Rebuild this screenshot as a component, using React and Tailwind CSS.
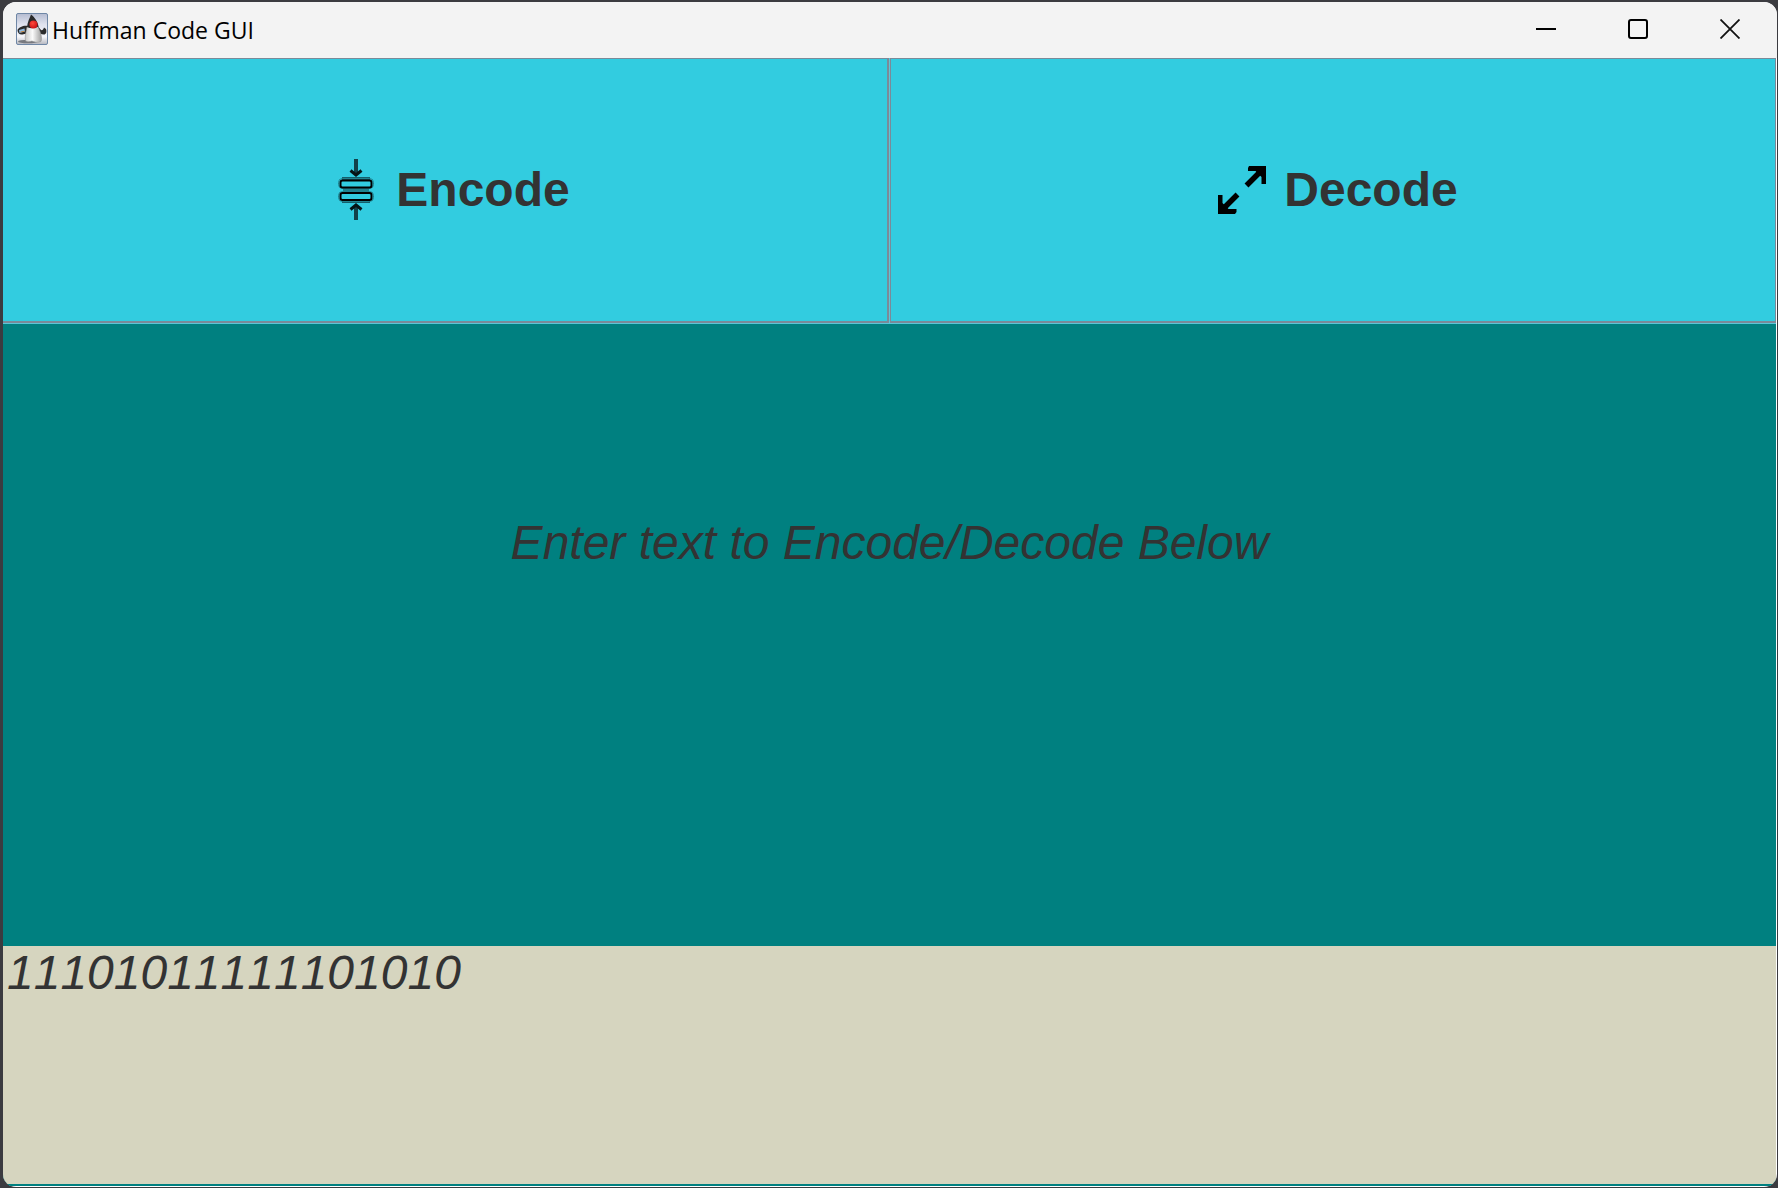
const buttonFace =
  "flex items-center justify-center gap-2 border-t border-b-2 border-[#7a8a99] bg-[#32cce0] pl-1 text-5xl font-bold text-[#333333]";

function DukeIcon() {
  return (
    <svg width="32" height="32" viewBox="0 0 32 32" aria-hidden="true">
      <defs>
        <linearGradient id="tile" x1="0" y1="0" x2="0" y2="1">
          <stop offset="0" stopColor="#b4bbd0" />
          <stop offset="0.35" stopColor="#dfe2ee" />
          <stop offset="0.75" stopColor="#f6f6fa" />
          <stop offset="1" stopColor="#b4b6be" />
        </linearGradient>
        <linearGradient id="belly" x1="0" y1="0" x2="1" y2="0">
          <stop offset="0" stopColor="#c9c9c9" />
          <stop offset="0.45" stopColor="#fafafa" />
          <stop offset="1" stopColor="#a0a0a0" />
        </linearGradient>
        <radialGradient id="nose" cx="0.4" cy="0.35" r="0.7">
          <stop offset="0" stopColor="#ff4a3c" />
          <stop offset="1" stopColor="#c90d12" />
        </radialGradient>
      </defs>
      <rect x="0.5" y="0.5" width="31" height="31" rx="1.5" fill="url(#tile)" stroke="#6f87a6" />
      <ellipse cx="12" cy="28.5" rx="10" ry="1.8" fill="#77797f" />
      <path d="M12 13C8 12 3 14 1.5 17c0 3 2 5 5 4.500l4-1z" fill="#2b2b2b" />
      <path d="M3 17l5.500-1.500.5 3-5.500 1.500z" fill="#8fb9e0" />
      <path d="M4.500 19l4-.8" stroke="#c88943" />
      <path d="M22 13c3 5 4.500 5.500 6 1.500l2 1.500c1 3 0 5.500-2 5.500-3 0-5-1-6-3z" fill="#2b2b2b" />
      <path d="M11 14c-1 5-2.500 10-1.500 14 2.500 1.500 4.500.5 6.500 0 2 1 6 2 9 .5 1.500-4-.5-10-3.500-16z" fill="url(#belly)" stroke="#888" strokeWidth="0.5" />
      <path d="M15 1.500c-1 3-3.500 7-4 12.500 4 1.800 7 1.500 11.500-.5C22 9 18.500 4 15 1.500z" fill="#2a2a2a" />
      <circle cx="17.500" cy="11.500" r="4" fill="url(#nose)" />
    </svg>
  );
}

function CompressIcon() {
  return (
    <svg width="64" height="64" viewBox="0 0 64 64" fill="none" aria-hidden="true">
      <path d="M32 1V15M32 48V62" stroke="#12414a" strokeWidth="4" />
      <path d="M26.500 12.500L32 17l5.500-4.500M26.500 51.500L32 47l5.500 4.500" stroke="#061416" strokeWidth="3" />
      <path d="M18 20.500h28M18 43.500h28" stroke="#155f6b" strokeWidth="3" />
      <path d="M19 32h26" stroke="#1f8390" strokeWidth="4" />
      <rect x="14.500" y="20.500" width="35" height="10" rx="4" stroke="#1f8390" />
      <rect x="14.500" y="33.500" width="35" height="10" rx="4" stroke="#1f8390" />
      <rect x="16.500" y="22.500" width="31" height="7" rx="2" fill="#32cce0" stroke="#000" strokeWidth="2" />
      <rect x="16.500" y="35" width="31" height="7" rx="2" fill="#32cce0" stroke="#000" strokeWidth="2" />
    </svg>
  );
}

function ExpandIcon() {
  return (
    <svg width="64" height="64" viewBox="0 0 64 64" fill="none" stroke="#000" strokeWidth="5.500" aria-hidden="true">
      <path d="M34.500 27.500L50 12M25.500 36.500L10 52" />
      <path d="M37 8h17v18h-4.500v-7l-6-6H36v-3z" fill="#000" stroke="none" />
      <path d="M23 56H6V37h4.500v8l6 6h8v3z" fill="#000" stroke="none" />
    </svg>
  );
}

const windowButton = "flex h-full w-[92px] items-center justify-center";

function TitleBar() {
  return (
    <header className="flex h-14 shrink-0 items-center bg-[#f3f3f3] pr-px pb-0.5 pl-[13px]">
      <DukeIcon />
      <h1 className="grow pt-0.5 pl-1 font-['Open_Sans',sans-serif] text-[23px] leading-8 text-black">
        Huffman Code GUI
      </h1>
      <button type="button" aria-label="Minimize" className={windowButton}>
        <svg width="20" height="20" stroke="#000" strokeWidth="2">
          <path d="M0 10h20" />
        </svg>
      </button>
      <button type="button" aria-label="Maximize" className={windowButton}>
        <svg width="20" height="20" fill="none" stroke="#000" strokeWidth="2">
          <rect x="1" y="1" width="18" height="18" rx="2" />
        </svg>
      </button>
      <button type="button" aria-label="Close" className={windowButton}>
        <svg width="20" height="20" stroke="#111" strokeWidth="1.800">
          <path d="M0.500 0.500l19 19M19.500 0.500l-19 19" />
        </svg>
      </button>
    </header>
  );
}

export default function App() {
  return (
    <div className="h-screen bg-[#3b3b40] pt-0.5 pr-px pb-px pl-[3px] font-['Liberation_Sans',Arial,sans-serif]">
      <main className="flex h-full flex-col overflow-hidden rounded-[13px] bg-white pb-px">
        <TitleBar />
        <div className="mr-px grid min-h-0 grow grid-rows-[266fr_622fr_238fr] border-b-2 border-[#008080] bg-[#008080]">
          <div className="grid grid-cols-2 gap-px bg-[#5cc5d8] pb-px">
            <button type="button" className={`${buttonFace} border-r-2`}>
              <CompressIcon />
              Encode
            </button>
            <button type="button" className={`${buttonFace} border-x`}>
              <ExpandIcon />
              Decode
            </button>
          </div>
          <label
            htmlFor="message"
            className="flex items-center justify-center pb-46 text-5xl text-[#333333] italic"
          >
            Enter text to Encode/Decode Below
          </label>
          <textarea
            id="message"
            defaultValue="11101011111101010"
            spellCheck={false}
            className="block h-full w-full resize-none bg-[#d6d5bf] px-1 text-5xl leading-[54px] text-[#333333] italic outline-none [font-kerning:none]"
          />
        </div>
      </main>
    </div>
  );
}
